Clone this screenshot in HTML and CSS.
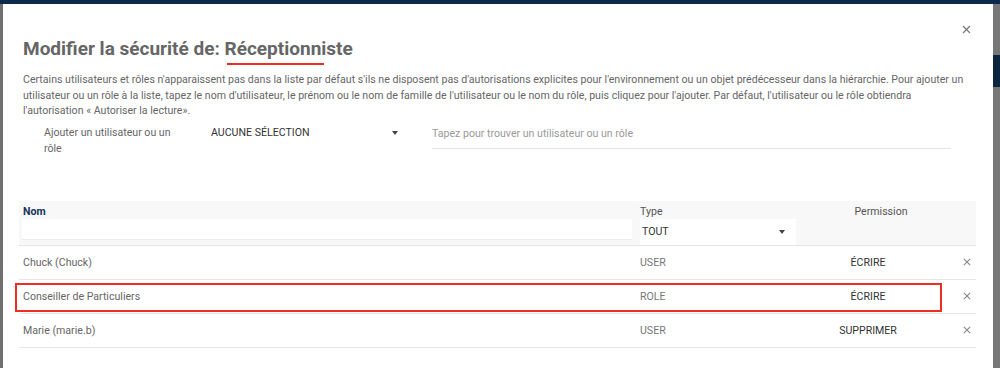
FILE: index.html
```html
<!DOCTYPE html>
<html lang="fr">
  <head>
    <meta charset="UTF-8" />
    <title>Modifier la sécurité</title>
    <link rel="stylesheet" href="styles.css">
  </head>
  <body>
    <div class="topbar"></div>

    <div class="screen">
      <div class="side-left"></div>

      <div class="modal">
        <button class="close-btn" type="button" aria-label="Fermer">
          <svg width="9" height="9" viewBox="0 0 9 9"><path d="M1 1L8 8M8 1L1 8" stroke="#777" stroke-width="1.2"/></svg>
        </button>

        <h1 class="modal-title">Modifier la sécurité de: <span class="marked">Réceptionniste</span></h1>

        <p class="intro">
          Certains utilisateurs et rôles n'apparaissent pas dans la liste par défaut s'ils ne disposent pas d'autorisations explicites pour l'environnement ou un objet prédécesseur dans la hiérarchie. Pour ajouter un utilisateur ou un rôle à la liste, tapez le nom d'utilisateur, le prénom ou le nom de famille de l'utilisateur ou le nom du rôle, puis cliquez pour l'ajouter. Par défaut, l'utilisateur ou le rôle obtiendra l'autorisation « Autoriser la lecture».
        </p>

        <div class="add-row">
          <label class="add-label">Ajouter un utilisateur ou un rôle</label>
          <div class="select-box">
            <span>AUCUNE SÉLECTION</span>
            <span class="caret"></span>
          </div>
          <div class="search-box">Tapez pour trouver un utilisateur ou un rôle</div>
        </div>

        <div class="table-wrap">
          <table class="perm-table">
            <thead>
              <tr>
                <th class="col-name">
                  <div class="th-label th-nom">Nom</div>
                  <div class="filter-input"></div>
                </th>
                <th class="col-type">
                  <div class="th-label th-type">Type</div>
                  <div class="filter-select">
                    <span>TOUT</span>
                    <span class="caret"></span>
                  </div>
                </th>
                <th class="col-perm">
                  <div class="th-label th-perm">Permission</div>
                </th>
                <th class="col-del"></th>
              </tr>
            </thead>
            <tbody>
              <tr>
                <td>Chuck (Chuck)</td>
                <td class="cell-type">USER</td>
                <td class="cell-perm">ÉCRIRE</td>
                <td class="cell-del"><svg class="x-icon" width="8" height="8" viewBox="0 0 8 8"><path d="M0.8 0.8L7.2 7.2M7.2 0.8L0.8 7.2" stroke="#888" stroke-width="1.1"/></svg></td>
              </tr>
              <tr>
                <td>Conseiller de Particuliers</td>
                <td class="cell-type">ROLE</td>
                <td class="cell-perm">ÉCRIRE</td>
                <td class="cell-del"><svg class="x-icon" width="8" height="8" viewBox="0 0 8 8"><path d="M0.8 0.8L7.2 7.2M7.2 0.8L0.8 7.2" stroke="#888" stroke-width="1.1"/></svg></td>
              </tr>
              <tr>
                <td>Marie (marie.b)</td>
                <td class="cell-type">USER</td>
                <td class="cell-perm">SUPPRIMER</td>
                <td class="cell-del"><svg class="x-icon" width="8" height="8" viewBox="0 0 8 8"><path d="M0.8 0.8L7.2 7.2M7.2 0.8L0.8 7.2" stroke="#888" stroke-width="1.1"/></svg></td>
              </tr>
            </tbody>
          </table>

          <!-- cadre rouge d'annotation sur la ligne du rôle -->
          <div class="annot-box"></div>
        </div>
      </div>

      <div class="side-right">
        <div class="side-block"></div>
      </div>
    </div>
  </body>
</html>
```

FILE: styles.css
```css
* {
  box-sizing: border-box;
}

body {
  margin: 0;
  font-family: Roboto, "Liberation Sans", Arial, sans-serif;
  background: #6f6f6f;
  height: 368px;
  overflow: hidden;
}

.topbar {
  height: 4px;
  background: #0c2a4b;
}

.screen {
  display: flex;
  height: 364px;
}

.side-left {
  width: 3px;
  background: #707070;
}

.side-right {
  width: 7px;
  background: #777;
  padding-top: 51px;
}

.side-block {
  height: 32px;
  background: #0d2640;
}

.modal {
  position: relative;
  flex: 1;
  background: #fff;
  padding: 0 16px 0 20px;
}

.close-btn {
  position: absolute;
  top: 21px;
  right: 22px;
  border: none;
  background: none;
  padding: 0;
  line-height: 0;
  cursor: pointer;
}

.modal-title {
  margin: 33px 0 0;
  font-size: 19px;
  line-height: 24px;
  font-weight: 700;
  color: #666;
}

.marked {
  position: relative;
}

/* soulignement rouge sous le nom */
.marked::after {
  content: "";
  position: absolute;
  left: 2px;
  right: 29px;
  bottom: -5px;
  height: 2px;
  background: #ee2e24;
}

.intro {
  margin: 11px 0 0;
  font-size: 10.6px;
  line-height: 15.5px;
  color: #666;
  padding-right: 4px;
}

.add-row {
  display: flex;
  align-items: flex-start;
  margin-top: 6px;
  padding-left: 21px;
}

.add-label {
  width: 145px;
  font-size: 10.6px;
  line-height: 16px;
  color: #666;
}

.select-box {
  display: flex;
  align-items: center;
  justify-content: space-between;
  width: 190px;
  margin-left: 22px;
  padding-right: 3px;
  font-size: 10.6px;
  line-height: 16px;
  color: #333;
}

.caret {
  width: 0;
  height: 0;
  border-left: 3.5px solid transparent;
  border-right: 3.5px solid transparent;
  border-top: 4px solid #444;
}

.search-box {
  width: 519px;
  margin-left: 31px;
  padding: 1px 0 6px;
  font-size: 10.6px;
  line-height: 16px;
  color: #999;
  border-bottom: 1px solid #e3e3e3;
}

.table-wrap {
  position: relative;
  width: 957px;
  margin: 44px 0 0 -4px;
}

.perm-table {
  width: 100%;
  border-collapse: collapse;
  font-size: 10.6px;
}

.perm-table thead th {
  background: #f8f8f8;
  text-align: left;
  vertical-align: top;
  padding: 0;
  height: 44px;
  border-bottom: 1px solid #e6e6e6;
}

.th-label {
  height: 18px;
  font-size: 10.6px;
  line-height: 16px;
  font-weight: 400;
  color: #555;
  padding-top: 3px;
}

.th-nom {
  font-weight: 700;
  color: #15335a;
  padding-left: 4px;
}

.th-type {
  padding-left: 4px;
}

.th-perm {
  text-align: center;
  padding-left: 26px;
}

.col-name {
  width: 617px;
  padding-right: 4px !important;
}

.col-type {
  width: 168px;
}

.col-perm {
  width: 128px;
}

.filter-input {
  height: 21px;
  margin-left: 3px;
  background: #fff;
  border-bottom: 1px solid #ececec;
}

.filter-select {
  display: flex;
  align-items: center;
  justify-content: space-between;
  width: 156px;
  height: 26px;
  margin-left: 4px;
  padding: 0 11px 0 2px;
  background: #fff;
  color: #333;
  font-size: 10.6px;
  font-weight: 400;
}

.perm-table tbody td {
  height: 34px;
  padding: 0 0 0 4px;
  color: #666;
  border-bottom: 1px solid #e6e6e6;
}

.perm-table .cell-type {
  color: #777;
}

.perm-table .cell-perm {
  text-align: center;
  color: #333;
  padding-left: 0;
}

.perm-table .cell-del {
  text-align: right;
  padding: 0 5px 0 0;
  line-height: 0;
}

.x-icon {
  display: inline-block;
}

.annot-box {
  position: absolute;
  left: -4px;
  top: 82px;
  width: 927px;
  height: 29px;
  border: 2px solid #ee2e24;
}
```
